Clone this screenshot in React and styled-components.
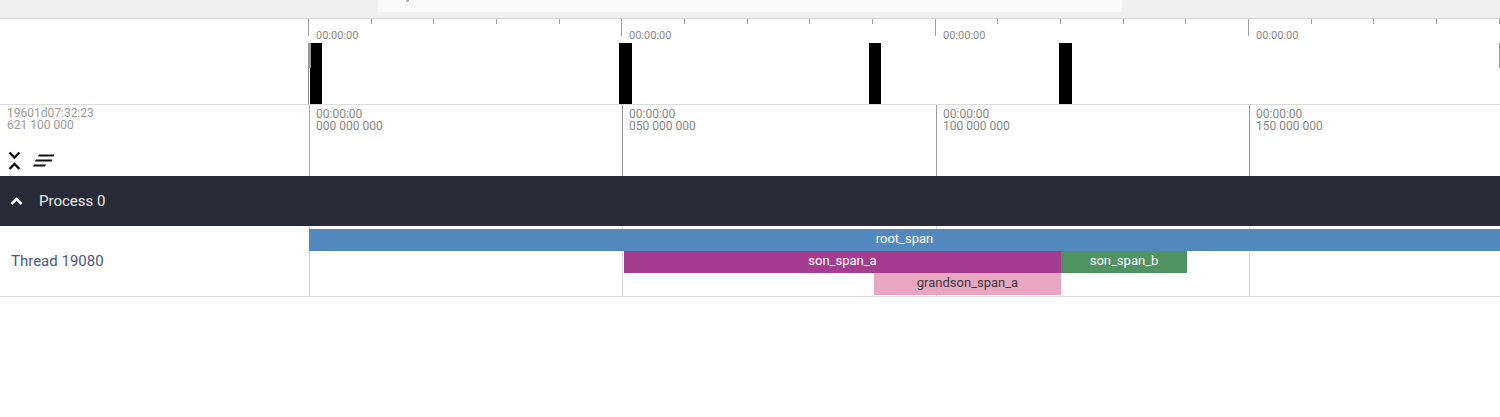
import React from 'react';
import styled, { createGlobalStyle } from 'styled-components';

const GlobalStyle = createGlobalStyle`
  html, body { margin: 0; padding: 0; background: #fff; }
  body {
    font-family: Roboto, "Noto Sans", "Liberation Sans", sans-serif;
    width: 1500px; height: 417px; overflow: hidden;
  }
`;

const LEFT_W = 308;
const ORIGIN = 1;
const PX_PER_50M = 313.3;
const toX = (ns) => ORIGIN + (ns / 50e6) * PX_PER_50M;
const CANVAS_W = 1500 - LEFT_W;

const Page = styled.div`
  display: flex;
  flex-direction: column;
  width: 1500px;
`;

const TopBar = styled.div`
  height: 18px;
  background: #f0f0f0;
  border-bottom: 1px solid #d8d8d8;
  box-shadow: 0 1px 2px rgba(0, 0, 0, 0.06);
  display: flex;
  padding-left: 378px;
`;

const SearchBox = styled.div`
  position: relative;
  width: 744px;
  height: 12px;
  background: #fafafa;
`;

const SearchMark = styled.span`
  position: absolute;
  left: 28px;
  top: 0;
  width: 3px;
  height: 2px;
  background: #b0b0b0;
  border-radius: 0 0 2px 2px;
`;

const Row = styled.div`
  display: flex;
  height: ${(p) => p.$h}px;
  border-bottom: ${(p) => (p.$border ? '1px solid #dcdcdc' : 'none')};
  background: ${(p) => p.$bg || '#fff'};
`;

const LeftPanel = styled.div`
  width: ${LEFT_W}px;
  flex: none;
`;

const Canvas = styled.div`
  position: relative;
  flex: 1;
  overflow: hidden;
`;

const Tick = styled.div.attrs((p) => ({ style: { left: `${p.$x}px` } }))`
  position: absolute;
  top: 0;
  width: 1px;
  height: ${(p) => (p.$major ? 17 : 5)}px;
  background: #a0a0a0;
`;

const OverviewLabel = styled.span.attrs((p) => ({ style: { left: `${p.$x}px` } }))`
  position: absolute;
  top: 11px;
  font-size: 11px;
  line-height: 12px;
  color: #8c8c8c;
  white-space: nowrap;
`;

const ActivityBar = styled.div.attrs((p) => ({
  style: { left: `${p.$x}px`, width: `${p.$w}px` },
}))`
  position: absolute;
  top: 24px;
  bottom: 0;
  background: #000;
`;

const WindowLine = styled.div.attrs((p) => ({ style: { left: `${p.$x}px` } }))`
  position: absolute;
  top: 24px;
  bottom: 0;
  width: 1px;
  background: #8a8a8a;
`;

const WindowHandle = styled.div.attrs((p) => ({ style: { left: `${p.$x}px` } }))`
  position: absolute;
  top: 24px;
  height: 25px;
  width: ${(p) => p.$w}px;
  background: #9b9b9b;
  border-radius: 1px;
`;

const AxisLeft = styled(LeftPanel)`
  display: flex;
  flex-direction: column;
  justify-content: space-between;
  padding: 2px 0 5px 7px;
  box-sizing: border-box;
`;

const TimeText = styled.div`
  font-size: 12px;
  line-height: 12px;
  color: #9a9a9a;
  white-space: pre;
`;

const IconRow = styled.div`
  display: flex;
  align-items: center;
  gap: 12px;
  margin-left: 1px;
`;

const GridLine = styled.div.attrs((p) => ({ style: { left: `${p.$x}px` } }))`
  position: absolute;
  top: 0;
  bottom: 0;
  width: 1px;
  background: ${(p) => p.$color};
`;

const AxisLabel = styled.div.attrs((p) => ({ style: { left: `${p.$x}px` } }))`
  position: absolute;
  top: 3px;
  font-size: 12px;
  line-height: 12px;
  color: #888;
  white-space: pre;
`;

const ProcessHeader = styled.div`
  height: 50px;
  background: #272b38;
  display: flex;
  align-items: center;
  padding-left: 10px;
  gap: 16px;
  color: #ececec;
  font-size: 15px;
`;

const ThreadLeft = styled(LeftPanel)`
  display: flex;
  align-items: center;
  padding-left: 11px;
  box-sizing: border-box;
  font-size: 15px;
  color: #4c5882;
`;

const Slice = styled.div.attrs((p) => ({
  style: { left: `${p.$x}px`, width: `${p.$w}px`, top: `${3 + p.$depth * 22}px` },
}))`
  position: absolute;
  height: 22px;
  background: ${(p) => p.$color};
  color: ${(p) => p.$text || '#fff'};
  font-size: 13px;
  line-height: 20px;
  text-align: center;
  overflow: hidden;
  white-space: nowrap;
`;

const majors = [0, 50e6, 100e6, 150e6];
const overviewBars = [
  { x: 2, w: 12 },
  { x: 311, w: 13 },
  { x: 561, w: 12 },
  { x: 751, w: 13 },
];

const slices = [
  { name: 'root_span', start: 0, end: 400e6, depth: 0, color: '#5189be' },
  { name: 'son_span_a', start: 50.2e6, end: 120e6, depth: 1, color: '#a43c90' },
  { name: 'son_span_b', start: 120e6, end: 140.2e6, depth: 1, color: '#509262' },
  { name: 'grandson_span_a', start: 90.2e6, end: 120e6, depth: 2, color: '#e9a6c1', text: '#3a3a3a' },
];

const pad = (n) => String(n).padStart(9, '0').replace(/(\d{3})(\d{3})(\d{3})/, '$1 $2 $3');

function UnfoldIcon() {
  return (
    <svg width="13" height="20" viewBox="0 0 13 20">
      <polyline points="1.5,1.5 6.5,6.5 11.5,1.5" fill="none" stroke="#111" strokeWidth="2.4" />
      <polyline points="1.5,18 6.5,13 11.5,18" fill="none" stroke="#111" strokeWidth="2.4" />
    </svg>
  );
}

function SortIcon() {
  return (
    <svg width="22" height="14" viewBox="0 0 22 14">
      <polygon points="6,0.5 21.5,0.5 20.5,2.5 5,2.5" fill="#111" />
      <polygon points="3,5.5 19.5,5.5 18.5,7.5 2,7.5" fill="#111" />
      <polygon points="1,10.5 13,10.5 12,12.5 0,12.5" fill="#111" />
    </svg>
  );
}

function ChevronUp() {
  return (
    <svg width="13" height="10" viewBox="0 0 13 10">
      <polyline points="1.5,8 6.5,3 11.5,8" fill="none" stroke="#fff" strokeWidth="2.5" />
    </svg>
  );
}

export default function App() {
  const minorStep = PX_PER_50M / 5;
  const ticks = [];
  for (let i = 0; i * minorStep < CANVAS_W; i++) {
    ticks.push({ x: Math.round(i * minorStep), major: i % 5 === 0 });
  }
  return (
    <Page>
      <GlobalStyle />
      <TopBar>
        <SearchBox>
          <SearchMark />
        </SearchBox>
      </TopBar>

      <Row $h={85} $border>
        <LeftPanel />
        <Canvas>
          {ticks.map((t, i) => (
            <Tick key={i} $x={t.x} $major={t.major} />
          ))}
          {majors.map((m) => (
            <OverviewLabel key={m} $x={Math.round(toX(m)) + 7}>00:00:00</OverviewLabel>
          ))}
          {overviewBars.map((b, i) => (
            <ActivityBar key={i} $x={b.x} $w={b.w} />
          ))}
          <WindowLine $x={0} />
          <WindowHandle $x={-3} $w={6} />
          <WindowHandle $x={CANVAS_W - 1} $w={2} />
        </Canvas>
      </Row>

      <Row $h={71}>
        <AxisLeft>
          <TimeText>{'19601d07:32:23\n621 100 000'}</TimeText>
          <IconRow>
            <UnfoldIcon />
            <SortIcon />
          </IconRow>
        </AxisLeft>
        <Canvas>
          {majors.map((m, i) => (
            <React.Fragment key={m}>
              <GridLine $x={Math.round(toX(m))} $color={i === 0 ? '#a3a8cc' : '#9c9c9c'} />
              <AxisLabel $x={Math.round(toX(m)) + 7}>{`00:00:00\n${pad(m)}`}</AxisLabel>
            </React.Fragment>
          ))}
        </Canvas>
      </Row>

      <ProcessHeader>
        <ChevronUp />
        <span>Process 0</span>
      </ProcessHeader>

      <Row $h={70} $border>
        <ThreadLeft>Thread 19080</ThreadLeft>
        <Canvas>
          {majors.map((m, i) => (
            <GridLine key={m} $x={Math.round(toX(m))} $color={i === 0 ? '#c9cde8' : '#dedede'} />
          ))}
          {slices.map((s) => {
            const x = Math.round(toX(s.start));
            const end = Math.min(Math.round(toX(s.end)), CANVAS_W);
            return (
              <Slice key={s.name} $x={x} $w={end - x} $depth={s.depth} $color={s.color} $text={s.text}>
                {s.name}
              </Slice>
            );
          })}
        </Canvas>
      </Row>
    </Page>
  );
}
